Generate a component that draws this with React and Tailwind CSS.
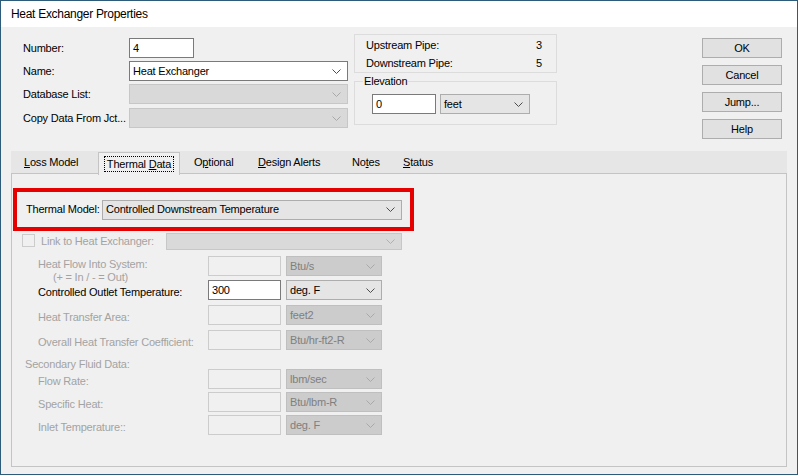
import React from 'react';

const Chevron = ({ color = '#555555' }) => (
  <svg width="9" height="5" viewBox="0 0 9 5" className="shrink-0">
    <polyline points="0.5,0.5 4.5,4.5 8.5,0.5" fill="none" stroke={color} strokeWidth="1" />
  </svg>
);

const selectStyles = {
  white: 'bg-white border-[#7a7a7a] text-black',
  enabled: 'bg-[#e5e5e5] border-[#adadad] text-black',
  disabled: 'bg-[#cccccc] border-[#bfbfbf] text-[#7f7f7f]',
  empty: 'bg-[#d9d9d9] border-[#c7c7c7] text-[#7f7f7f]',
};

const Select = ({ w, value = '', variant = 'enabled' }) => (
  <div className={`flex items-center justify-between h-[20px] border pl-[3px] pr-[6px] shrink-0 ${selectStyles[variant]} ${w}`}>
    <span>{value}</span>
    <Chevron color={variant === 'white' || variant === 'enabled' ? '#4d4d4d' : '#a9a9a9'} />
  </div>
);

const TextBox = ({ w, value = '', enabled = false }) => (
  <div
    className={`flex items-center h-[20px] border px-[3px] shrink-0 ${w} ${
      enabled ? 'bg-white border-[#7a7a7a] text-black' : 'bg-[#f0f0f0] border-[#cccccc]'
    }`}
  >
    {value}
  </div>
);

const Button = ({ children }) => (
  <div className="flex items-center justify-center h-[20px] w-[80px] border border-[#adadad] bg-[#e1e1e1]">
    {children}
  </div>
);

const FieldRow = ({ label, unit, value, enabled = false, className = '' }) => (
  <div className={`flex items-center h-[20px] ${className}`}>
    <div className={`w-[170px] ml-[26px] pt-[4px] ${enabled ? 'text-black' : 'text-[#a3a3a3]'}`}>{label}</div>
    <TextBox w="w-[73px]" value={value} enabled={enabled} />
    <div className="ml-[5px]">
      <Select w="w-[96px]" value={unit} variant={enabled ? 'enabled' : 'disabled'} />
    </div>
  </div>
);

const App = () => {
  return (
    <div className="w-[798px] h-[475px] border border-[#2d5c7a] bg-[#f0f0f0] flex flex-col overflow-hidden font-['Liberation_Sans',Arial,sans-serif] text-[11px] tracking-[-0.2px] leading-[13px] text-black">
      {/* Title bar */}
      <div className="h-[26px] bg-white pl-[10px] flex items-center text-[12px] tracking-[-0.3px]">
        Heat Exchanger Properties
      </div>

      {/* Top section */}
      <div className="h-[124px] flex items-start pt-[7px] pl-[22px]">
        <div className="flex flex-col mt-[4px]">
          <div className="flex items-center h-[20px]">
            <div className="w-[106px]">Number:</div>
            <TextBox w="w-[65px]" value="4" enabled />
          </div>
          <div className="flex items-center h-[20px] mt-[3px]">
            <div className="w-[106px]">Name:</div>
            <Select w="w-[219px]" value="Heat Exchanger" variant="white" />
          </div>
          <div className="flex items-center h-[20px] mt-[3px]">
            <div className="w-[106px]">Database List:</div>
            <Select w="w-[219px]" variant="empty" />
          </div>
          <div className="flex items-center h-[20px] mt-[4px]">
            <div className="w-[106px]">Copy Data From Jct...</div>
            <Select w="w-[219px]" variant="empty" />
          </div>
        </div>

        <div className="ml-[6px] w-[203px] flex flex-col">
          <div className="border border-[#dcdcdc] pt-[1px] pl-[11px] pr-[14px]">
            <div className="flex items-center justify-between h-[18px]">
              <span>Upstream Pipe:</span>
              <span>3</span>
            </div>
            <div className="flex items-center justify-between h-[18px]">
              <span>Downstream Pipe:</span>
              <span>5</span>
            </div>
          </div>
          <fieldset className="mt-[3px] border border-[#dcdcdc] pl-[8px] pb-[10px]">
            <legend className="px-[1px] leading-[10px]">Elevation</legend>
            <div className="flex items-center mt-[8px] ml-[9px]">
              <TextBox w="w-[64px]" value="0" enabled />
              <div className="ml-[4px]">
                <Select w="w-[90px]" value="feet" variant="enabled" />
              </div>
            </div>
          </fieldset>
        </div>

        <div className="ml-auto mr-[15px] mt-[4px] flex flex-col gap-[7px]">
          <Button>OK</Button>
          <Button>Cancel</Button>
          <Button>Jump...</Button>
          <Button>Help</Button>
        </div>
      </div>

      {/* Tabs */}
      <div className="mx-[10px] flex flex-col">
        <div className="h-[22px] bg-[#e6e6e6] flex items-start">
          <div className="w-[13px]" />
          <div className="w-[74px] h-[22px] flex items-center">
            <span><span className="underline">L</span>oss Model</span>
          </div>
          <div className="relative z-10 w-[82px] h-[23px] mt-[1px] -mb-[2px] bg-[#f0f0f0] border border-b-0 border-[#c4c4c4] flex items-center justify-center">
            <span className="border border-dotted border-black px-[2px] leading-[14px]">
              Thermal <span className="underline">D</span>ata
            </span>
          </div>
          <div className="ml-[14px] w-[64px] h-[22px] flex items-center">
            <span>O<span className="underline">p</span>tional</span>
          </div>
          <div className="w-[94px] h-[22px] flex items-center">
            <span><span className="underline">D</span>esign Alerts</span>
          </div>
          <div className="w-[51px] h-[22px] flex items-center">
            <span>No<span className="underline">t</span>es</span>
          </div>
          <div className="h-[22px] flex items-center">
            <span><span className="underline">S</span>tatus</span>
          </div>
        </div>

        <div className="h-[294px] border border-[#c4c4c4] bg-[#f0f0f0] flex flex-col">
          {/* Highlighted thermal model */}
          <div className="ml-[1px] mt-[14px] w-[401px] h-[43px] border-4 border-[#e60000] flex items-center pl-[9px]">
            <div className="w-[76px]">Thermal Model:</div>
            <Select w="w-[300px]" value="Controlled Downstream Temperature" variant="enabled" />
          </div>

          <div className="flex items-start h-[17px] mt-[2px]">
            <div className="ml-[10px] mt-[1px] w-[13px] h-[13px] border border-[#cccccc] bg-[#f0f0f0]" />
            <div className="ml-[6px] w-[125px] mt-[2px] text-[#a3a3a3]">Link to Heat Exchanger:</div>
            <div className="w-[236px] h-[17px] bg-[#d9d9d9] border border-[#c7c7c7] flex items-center justify-end pr-[6px]">
              <Chevron color="#b0b0b0" />
            </div>
          </div>

          <div className="flex items-start h-[20px] mt-[6px]">
            <div className="w-[170px] ml-[26px] pt-[2px] text-[#a3a3a3]">
              <div>Heat Flow Into System:</div>
              <div className="pl-[15px]">(+ = In / - = Out)</div>
            </div>
            <TextBox w="w-[73px]" />
            <div className="ml-[5px]">
              <Select w="w-[96px]" value="Btu/s" variant="disabled" />
            </div>
          </div>
          <FieldRow className="mt-[4px]" label="Controlled Outlet Temperature:" value="300" unit="deg. F" enabled />
          <FieldRow className="mt-[5px]" label="Heat Transfer Area:" unit="feet2" />
          <FieldRow className="mt-[5px]" label="Overall Heat Transfer Coefficient:" unit="Btu/hr-ft2-R" />

          <div className="ml-[13px] mt-[8px] leading-[12px] text-[#a3a3a3]">Secondary Fluid Data:</div>

          <FieldRow className="-mt-[1px]" label="Flow Rate:" unit="lbm/sec" />
          <FieldRow className="mt-[3px]" label="Specific Heat:" unit="Btu/lbm-R" />
          <FieldRow className="mt-[3px]" label="Inlet Temperature::" unit="deg. F" />
        </div>
      </div>
    </div>
  );
};

export default App;
